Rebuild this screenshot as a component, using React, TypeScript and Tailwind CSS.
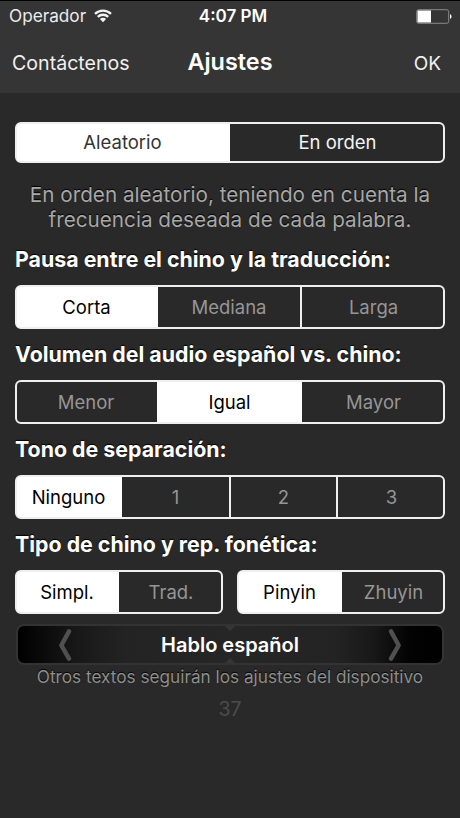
import { useState } from "react";
import clsx from "clsx";

type Option = { label: string; cell: string; off?: string };

function Segmented({
  options,
  initial = 0,
  className,
  activeText = "text-black",
}: {
  options: Option[];
  initial?: number;
  className: string;
  activeText?: string;
}) {
  const [selected, setSelected] = useState(initial);

  return (
    <div className={clsx("flex overflow-hidden rounded-[6px] border-2 border-[#efefef] bg-[#efefef]", className)}>
      {options.map((option, i) => (
        <button
          key={option.label}
          onClick={() => setSelected(i)}
          className={clsx(
            "flex h-full items-center justify-center text-[18.5px] leading-none first:pr-[2px] last:pl-[2px]",
            option.cell,
            i === selected ? "bg-white" : "bg-[#292929]",
            i === selected ? activeText : option.off || "text-[#969696]",
            i > 0 && i !== selected && i - 1 !== selected && "border-l-2 border-[#efefef]"
          )}
        >
          {option.label}
        </button>
      ))}
    </div>
  );
}

function Heading({ children, className }: { children: string; className: string }) {
  return (
    <h2
      className={clsx(
        "flex h-[42px] items-center text-[21.35px] font-bold whitespace-nowrap text-white [text-shadow:0_-1px_1px_#000]",
        className
      )}
    >
      {children}
    </h2>
  );
}

function Chevron({ flip }: { flip?: boolean }) {
  return (
    <svg
      className={clsx("h-8 w-[14px]", flip && "-scale-x-100")}
      viewBox="0 0 14 32"
      fill="none"
      stroke="#505050"
      strokeWidth="4.4"
      strokeLinecap="round"
      strokeLinejoin="round"
    >
      <path d="M11 2.4L3.4 16.3 11 29.6" />
    </svg>
  );
}

export default function App() {
  return (
    <div className="flex h-[818px] w-[460px] flex-col overflow-hidden bg-[#292929] font-['Inter',sans-serif]">
      {/* Status bar + navigation */}
      <header className="h-[93px] shrink-0 border-t border-black bg-[#353535] text-white">
        <div className="grid h-[30px] grid-cols-[1fr_auto_1fr] items-center pr-[8px] pl-[9px]">
          <div className="flex items-center gap-2 text-[17.2px] text-[#ececec]">
            <span>Operador</span>
            <svg className="h-[14px] w-[18px]" viewBox="0 0 18 14" fill="none" stroke="#f4f4f4" strokeWidth="2.3">
              <path d="M1 4.9a11.4 11.4 0 0 1 16 0" />
              <path d="M3.8 7.9a7.4 7.4 0 0 1 10.4 0" />
              <path d="M9 13.2L5.9 10.1a4.4 4.4 0 0 1 6.2 0z" fill="#f4f4f4" stroke="none" />
            </svg>
          </div>
          <span className="pt-[2px] pl-[5px] text-[17px] font-semibold">4:07 PM</span>
          <svg className="h-[15px] w-[36px] justify-self-end" viewBox="0 0 36 15" fill="none">
            <rect x="0.7" y="0.7" width="32" height="13.6" rx="2" stroke="#8a8a8a" />
            <path d="M1.5 1.5H15v12H1.5z" fill="#fff" />
            <path d="M34 5.2c2 .6 2 4 0 4.6z" fill="#fff" />
          </svg>
        </div>
        <div className="grid h-[62px] grid-cols-[1fr_auto_1fr] items-center px-[12px]">
          <button className="justify-self-start pt-[3px] text-[19.6px] text-[#f0f0f0]">Contáctenos</button>
          <h1 className="text-[23.4px] font-semibold">Ajustes</h1>
          <button className="mr-[7px] justify-self-end pt-[4px] text-[19px] text-[#f0f0f0]">OK</button>
        </div>
      </header>

      <main className="flex flex-col px-[15px] pt-[29px]">
        <Segmented
          className="h-[41px]"
          activeText="text-[#333]"
          options={[
            { label: "Aleatorio", cell: "w-[213px]" },
            { label: "En orden", cell: "flex-1", off: "text-[#f4f4f4]" },
          ]}
        />
        <p className="mt-[19px] h-[56px] text-center text-[20.7px] leading-[25px] whitespace-nowrap text-[#a8a8a8] [text-shadow:0_-1px_1px_#000]">
          En orden aleatorio, teniendo en cuenta la
          <br />
          frecuencia deseada de cada palabra.
        </p>

        <Heading className="mb-[5px]">Pausa entre el chino y la traducción:</Heading>
        <Segmented
          className="h-[44px]"
          options={[
            { label: "Corta", cell: "w-[141px]" },
            { label: "Mediana", cell: "w-[142px]" },
            { label: "Larga", cell: "flex-1" },
          ]}
        />

        <Heading className="mt-[4px] mb-[5px]">Volumen del audio español vs. chino:</Heading>
        <Segmented
          className="h-[44px]"
          initial={1}
          options={[
            { label: "Menor", cell: "w-[140px]" },
            { label: "Igual", cell: "w-[145px]" },
            { label: "Mayor", cell: "flex-1" },
          ]}
        />

        <Heading className="mt-[4px] mb-[5px]">Tono de separación:</Heading>
        <Segmented
          className="h-[44px]"
          options={[
            { label: "Ninguno", cell: "w-[105px]" },
            { label: "1", cell: "w-[107px]" },
            { label: "2", cell: "w-[107px]" },
            { label: "3", cell: "flex-1" },
          ]}
        />

        <Heading className="mt-[4px] mb-[5px]">Tipo de chino y rep. fonética:</Heading>
        <div className="flex gap-[14px]">
          <Segmented
            className="h-[44px] w-[208px]"
            options={[
              { label: "Simpl.", cell: "w-[102px]" },
              { label: "Trad.", cell: "flex-1" },
            ]}
          />
          <Segmented
            className="h-[44px] w-[208px]"
            options={[
              { label: "Pinyin", cell: "w-[103px]" },
              { label: "Zhuyin", cell: "flex-1" },
            ]}
          />
        </div>

        {/* Language picker */}
        <div className="relative mx-px mt-[10px] flex h-[41px] items-center justify-between rounded-[8px] border-2 border-[#333] bg-[linear-gradient(90deg,#000_0%,#0c0c0c_7%,#181818_14%,#232323_25%,#262626_50%,#232323_75%,#181818_84%,#030303_92%,#000_100%)] px-[40px]">
          <Chevron />
          <span className="text-[20px] font-semibold text-white">Hablo español</span>
          <Chevron flip />
          <svg className="absolute top-0 left-1/2 h-full w-3 -translate-x-1/2" viewBox="0 0 12 37" fill="#363636">
            <path d="M1 0h10L6 5z" />
            <path d="M1 37h10l-5-5z" />
          </svg>
        </div>
        <p className="text-center text-[17.2px] leading-6 whitespace-nowrap text-[#8f8f8f] [text-shadow:0_-1px_1px_#000]">
          Otros textos seguirán los ajustes del dispositivo
        </p>
        <p className="mt-[8px] text-center text-[19.5px] leading-6 text-[#4c4c4c]">37</p>
      </main>
    </div>
  );
}
